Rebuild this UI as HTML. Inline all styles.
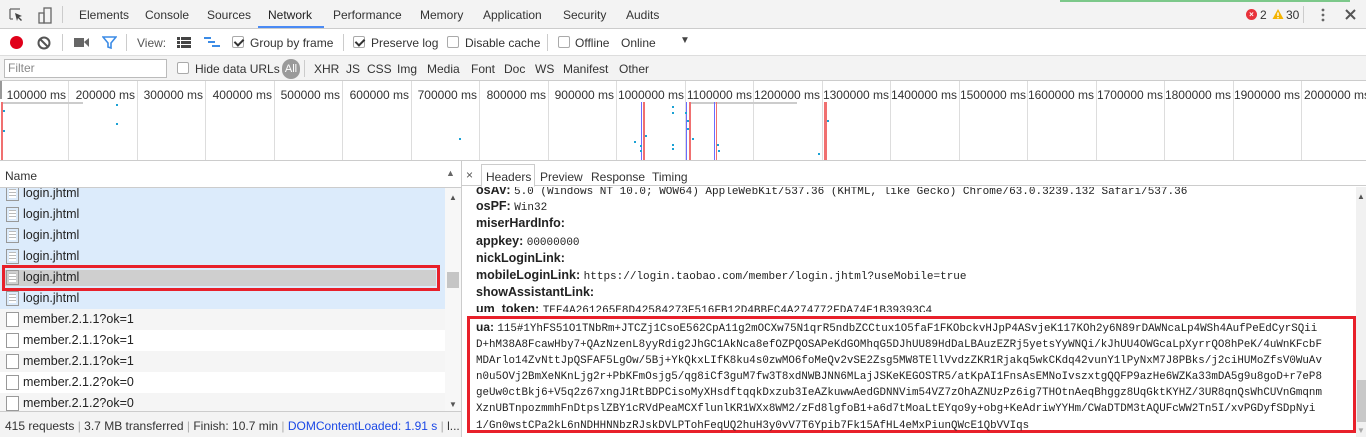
<!DOCTYPE html>
<html><head><meta charset="utf-8"><style>
*{margin:0;padding:0;box-sizing:border-box}
body{width:1366px;height:437px;overflow:hidden;background:#fff;font-family:"Liberation Sans",Arial,sans-serif;font-size:12px;color:#333;position:relative}
.a{position:absolute;white-space:nowrap}
.cb{position:absolute;width:12px;height:12px;border:1px solid #aaa;border-radius:2px;background:#fff}
.cb.on::after{content:"";position:absolute;left:3px;top:0px;width:4px;height:7px;border:solid #333;border-width:0 2px 2px 0;transform:rotate(45deg)}
.sep{position:absolute;width:1px;background:#ccc}
.row{position:absolute;left:0;width:445px;height:21px;line-height:21px;padding-left:23px;font-size:12.5px;color:#222}
.ic{position:absolute;left:6px;top:3px;width:13px;height:15px;border:1px solid #999;background:#fff}
.ic.t{background:repeating-linear-gradient(#fff 0 2px,#bbb 2px 3px);background-clip:content-box;padding:2px}
.hk{position:absolute;left:476px;font-weight:bold;font-size:12.5px;color:#222;white-space:nowrap}
.hk span{font-weight:normal;font-family:"Liberation Mono",monospace;font-size:11px}
.ua{position:absolute;left:476px;font-family:"Liberation Mono",monospace;font-size:10.85px;color:#222;white-space:nowrap;line-height:16.1px}
.gl{position:absolute;top:81px;height:79px;width:1px;background:#ddd}
.tl{position:absolute;top:88px;font-size:12px;color:#333;width:68px;text-align:right}
.d{position:absolute;width:2px;height:2px;background:#1ba1d4}
</style></head><body>
<div class="a" style="left:0;top:0;width:1366px;height:29px;background:#f3f3f3;border-bottom:1px solid #ccc"></div>
<div class="a" style="left:1060px;top:0;width:290px;height:2px;background:#7cc88a"></div>
<svg class="a" style="left:8px;top:7px" width="45" height="18" viewBox="0 0 45 18"><path d="M2 2h10M2 2v10M2 12h3" stroke="#666" fill="none" stroke-width="1.3"/><path d="M7 6l7 3-3 1 3 3-1 1-3-3-1 3z" fill="#444"/><rect x="36" y="1" width="7" height="15" fill="none" stroke="#666" stroke-width="1.3"/><rect x="31" y="6" width="5" height="10" fill="none" stroke="#666" stroke-width="1.3"/></svg>
<div class="sep" style="left:62px;top:6px;height:17px"></div>
<div class="a" style="left:79px;top:8px">Elements</div>
<div class="a" style="left:145px;top:8px">Console</div>
<div class="a" style="left:207px;top:8px">Sources</div>
<div class="a" style="left:268px;top:8px;color:#222">Network</div>
<div class="a" style="left:258px;top:26px;width:66px;height:2px;background:#4a8af4"></div>
<div class="a" style="left:333px;top:8px">Performance</div>
<div class="a" style="left:420px;top:8px">Memory</div>
<div class="a" style="left:483px;top:8px">Application</div>
<div class="a" style="left:563px;top:8px">Security</div>
<div class="a" style="left:626px;top:8px">Audits</div>
<div class="a" style="left:1246px;top:9px;width:11px;height:11px;border-radius:50%;background:#e8323a;color:#fff;font-size:8px;line-height:11px;text-align:center;font-weight:bold">×</div>
<div class="a" style="left:1260px;top:8px">2</div>
<svg class="a" style="left:1272px;top:8px" width="12" height="12"><path d="M6 1L11.5 11H0.5z" fill="#f4b400"/><rect x="5.3" y="4.5" width="1.4" height="3.5" fill="#fff"/><rect x="5.3" y="9" width="1.4" height="1.3" fill="#fff"/></svg>
<div class="a" style="left:1286px;top:8px">30</div>
<div class="sep" style="left:1303px;top:6px;height:17px"></div>
<svg class="a" style="left:1320px;top:7px" width="6" height="16"><circle cx="3" cy="3" r="1.4" fill="#666"/><circle cx="3" cy="8" r="1.4" fill="#666"/><circle cx="3" cy="13" r="1.4" fill="#666"/></svg>
<svg class="a" style="left:1345px;top:9px" width="11" height="11"><path d="M1 1l9 9M10 1l-9 9" stroke="#555" stroke-width="2"/></svg>
<div class="a" style="left:0;top:30px;width:1366px;height:26px;background:#fff;border-bottom:1px solid #ddd"></div>
<div class="a" style="left:10px;top:36px;width:13px;height:13px;border-radius:50%;background:#e0001a"></div>
<svg class="a" style="left:37px;top:36px" width="14" height="14"><circle cx="7" cy="7" r="5.5" stroke="#555" stroke-width="2" fill="none"/><path d="M3 3l8 8" stroke="#555" stroke-width="2"/></svg>
<div class="sep" style="left:62px;top:34px;height:17px"></div>
<svg class="a" style="left:74px;top:37px" width="15" height="11"><rect x="0" y="1" width="10" height="9" fill="#666"/><path d="M10 5l5-4v9z" fill="#666"/></svg>
<svg class="a" style="left:102px;top:36px" width="15" height="13"><path d="M1 1h13l-5 6v5l-3-1v-4z" fill="none" stroke="#3b8be6" stroke-width="1.6"/></svg>
<div class="sep" style="left:126px;top:34px;height:17px"></div>
<div class="a" style="left:137px;top:36px;color:#555">View:</div>
<svg class="a" style="left:177px;top:37px" width="14" height="11"><rect x="0" y="0" width="3" height="3" fill="#444"/><rect x="4" y="0" width="10" height="3" fill="#444"/><rect x="0" y="4" width="3" height="3" fill="#444"/><rect x="4" y="4" width="10" height="3" fill="#444"/><rect x="0" y="8" width="3" height="3" fill="#444"/><rect x="4" y="8" width="10" height="3" fill="#444"/></svg>
<svg class="a" style="left:204px;top:37px" width="16" height="12"><rect x="0" y="0" width="7" height="2" fill="#3b8be6"/><rect x="4" y="4" width="7" height="2" fill="#3b8be6"/><rect x="8" y="8" width="8" height="2" fill="#3b8be6"/></svg>
<div class="cb on" style="left:232px;top:36px"></div><div class="a" style="left:250px;top:36px">Group by frame</div>
<div class="sep" style="left:343px;top:34px;height:17px"></div>
<div class="cb on" style="left:353px;top:36px"></div><div class="a" style="left:371px;top:36px">Preserve log</div>
<div class="cb" style="left:447px;top:36px"></div><div class="a" style="left:465px;top:36px">Disable cache</div>
<div class="sep" style="left:547px;top:34px;height:17px"></div>
<div class="cb" style="left:558px;top:36px"></div><div class="a" style="left:575px;top:36px">Offline</div>
<div class="a" style="left:621px;top:36px">Online</div>
<div class="a" style="left:680px;top:35px;font-size:10px;color:#444">▼</div>
<div class="a" style="left:0;top:56px;width:1366px;height:25px;background:#f3f3f3;border-bottom:1px solid #ccc"></div>
<div class="a" style="left:4px;top:59px;width:163px;height:19px;border:1px solid #bbb;background:#fff;color:#888;padding:2px 3px;line-height:13px">Filter</div>
<div class="cb" style="left:177px;top:62px"></div><div class="a" style="left:195px;top:62px">Hide data URLs</div>
<div class="a" style="left:282px;top:59px;width:18px;height:20px;border-radius:9px;background:#9a9a9a;color:#fff;text-align:center;line-height:20px;font-size:11px">All</div>
<div class="sep" style="left:304px;top:60px;height:17px"></div>
<div class="a" style="left:314px;top:62px">XHR</div><div class="a" style="left:346px;top:62px">JS</div><div class="a" style="left:367px;top:62px">CSS</div><div class="a" style="left:397px;top:62px">Img</div><div class="a" style="left:427px;top:62px">Media</div><div class="a" style="left:471px;top:62px">Font</div><div class="a" style="left:504px;top:62px">Doc</div><div class="a" style="left:535px;top:62px">WS</div><div class="a" style="left:563px;top:62px">Manifest</div><div class="a" style="left:619px;top:62px">Other</div>
<div class="a" style="left:0;top:160px;width:1366px;height:1px;background:#ccc"></div>
<div class="gl" style="left:68px"></div><div class="gl" style="left:137px"></div><div class="gl" style="left:205px"></div><div class="gl" style="left:274px"></div><div class="gl" style="left:342px"></div><div class="gl" style="left:411px"></div><div class="gl" style="left:479px"></div><div class="gl" style="left:548px"></div><div class="gl" style="left:616px"></div><div class="gl" style="left:685px"></div><div class="gl" style="left:753px"></div><div class="gl" style="left:822px"></div><div class="gl" style="left:890px"></div><div class="gl" style="left:959px"></div><div class="gl" style="left:1027px"></div><div class="gl" style="left:1096px"></div><div class="gl" style="left:1164px"></div><div class="gl" style="left:1233px"></div><div class="gl" style="left:1301px"></div>
<div class="tl" style="left:-2px">100000 ms</div><div class="tl" style="left:67px">200000 ms</div><div class="tl" style="left:135px">300000 ms</div><div class="tl" style="left:204px">400000 ms</div><div class="tl" style="left:272px">500000 ms</div><div class="tl" style="left:341px">600000 ms</div><div class="tl" style="left:409px">700000 ms</div><div class="tl" style="left:478px">800000 ms</div><div class="tl" style="left:546px">900000 ms</div><div class="tl" style="left:615px;width:69px">1000000 ms</div><div class="tl" style="left:684px;width:68px">1100000 ms</div><div class="tl" style="left:752px;width:68px">1200000 ms</div><div class="tl" style="left:821px;width:68px">1300000 ms</div><div class="tl" style="left:889px;width:68px">1400000 ms</div><div class="tl" style="left:958px;width:68px">1500000 ms</div><div class="tl" style="left:1026px;width:68px">1600000 ms</div><div class="tl" style="left:1095px;width:68px">1700000 ms</div><div class="tl" style="left:1163px;width:68px">1800000 ms</div><div class="tl" style="left:1232px;width:68px">1900000 ms</div><div class="a" style="left:1304px;top:88px">2000000 ms</div>
<div class="a" style="left:0;top:81px;width:2px;height:18px;background:#999"></div>
<div class="a" style="left:2px;top:102px;width:81px;height:2px;background:#ccc"></div>
<div class="a" style="left:690px;top:102px;width:107px;height:2px;background:#ccc"></div>
<div class="a" style="left:1px;top:102px;width:2px;height:58px;background:#f07070"></div>
<div class="a" style="left:641px;top:102px;width:1px;height:58px;background:#6b6bff"></div><div class="a" style="left:643px;top:102px;width:2px;height:58px;background:#f07070"></div>
<div class="a" style="left:686px;top:102px;width:1px;height:58px;background:#6b6bff"></div><div class="a" style="left:689px;top:102px;width:2px;height:58px;background:#f07070"></div>
<div class="a" style="left:714px;top:102px;width:1px;height:58px;background:#6b6bff"></div><div class="a" style="left:716px;top:102px;width:1px;height:58px;background:#f07070"></div>
<div class="a" style="left:824px;top:102px;width:3px;height:58px;background:#f07070"></div>
<div class="d" style="left:116px;top:104px"></div><div class="d" style="left:116px;top:123px"></div><div class="d" style="left:3px;top:130px"></div><div class="d" style="left:3px;top:110px"></div>
<div class="d" style="left:672px;top:106px"></div><div class="d" style="left:672px;top:112px"></div><div class="d" style="left:672px;top:144px"></div><div class="d" style="left:672px;top:148px"></div><div class="d" style="left:634px;top:141px"></div><div class="d" style="left:640px;top:145px"></div><div class="d" style="left:640px;top:150px"></div><div class="d" style="left:645px;top:135px"></div><div class="d" style="left:685px;top:112px"></div><div class="d" style="left:687px;top:120px"></div><div class="d" style="left:687px;top:128px"></div><div class="d" style="left:692px;top:138px"></div><div class="d" style="left:718px;top:150px"></div><div class="d" style="left:717px;top:144px"></div><div class="d" style="left:827px;top:120px"></div><div class="d" style="left:818px;top:153px"></div><div class="d" style="left:459px;top:138px"></div>
<div class="a" style="left:0;top:161px;width:461px;height:27px;background:#fff;border-bottom:1px solid #ccc"></div>
<div class="a" style="left:5px;top:169px">Name</div>
<div class="a" style="left:446px;top:168px;font-size:9px;color:#666">▲</div>
<div class="a" style="left:0;top:188px;width:445px;height:223px;overflow:hidden">
<div class="row" style="top:-5px;background:#dcebfb"><div class="ic t"></div>login.jhtml</div>
<div class="row" style="top:16px;background:#dcebfb"><div class="ic t"></div>login.jhtml</div>
<div class="row" style="top:37px;background:#dcebfb"><div class="ic t"></div>login.jhtml</div>
<div class="row" style="top:58px;background:#dcebfb"><div class="ic t"></div>login.jhtml</div>
<div class="row" style="top:79px;background:#dcebfb"><div class="a" style="left:4px;top:3px;width:432px;height:16px;background:#cfcfcf"></div><div class="ic t"></div><span style="position:relative">login.jhtml</span></div>
<div class="row" style="top:100px;background:#dcebfb"><div class="ic t"></div>login.jhtml</div>
<div class="row" style="top:121px;background:#f5f5f5"><div class="ic"></div>member.2.1.1?ok=1</div>
<div class="row" style="top:142px;background:#fff"><div class="ic"></div>member.2.1.1?ok=1</div>
<div class="row" style="top:163px;background:#f5f5f5"><div class="ic"></div>member.2.1.1?ok=1</div>
<div class="row" style="top:184px;background:#fff"><div class="ic"></div>member.2.1.2?ok=0</div>
<div class="row" style="top:205px;background:#f5f5f5"><div class="ic"></div>member.2.1.2?ok=0</div>
</div>
<div class="a" style="left:2px;top:265px;width:438px;height:26px;border:3px solid #e8202a"></div>
<div class="a" style="left:445px;top:188px;width:16px;height:223px;background:#f7f7f7"></div>
<div class="a" style="left:449px;top:193px;font-size:8px;color:#555">▲</div>
<div class="a" style="left:447px;top:272px;width:12px;height:16px;background:#c5c5c5"></div>
<div class="a" style="left:449px;top:400px;font-size:8px;color:#555">▼</div>
<div class="a" style="left:0;top:411px;width:461px;height:26px;background:#f3f3f3;border-top:1px solid #ccc"></div>
<div class="a" style="left:5px;top:419px;color:#333">415 requests <span style="color:#aaa">|</span> 3.7 MB transferred <span style="color:#aaa">|</span> Finish: 10.7 min <span style="color:#aaa">|</span> <span style="color:#1a47e6">DOMContentLoaded: 1.91 s</span> <span style="color:#aaa">|</span> l...</div>
<div class="a" style="left:461px;top:161px;width:1px;height:276px;background:#ccc"></div>
<div class="a" style="left:462px;top:161px;width:904px;height:25px;background:#fff;border-bottom:1px solid #ccc"></div>
<div class="a" style="left:466px;top:168px;font-size:12px;color:#555">×</div>
<div class="a" style="left:481px;top:164px;width:54px;height:23px;border:1px solid #ccc;border-bottom:1px solid #fff;background:#fff"></div>
<div class="a" style="left:486px;top:170px">Headers</div>
<div class="a" style="left:540px;top:170px">Preview</div>
<div class="a" style="left:591px;top:170px">Response</div>
<div class="a" style="left:652px;top:170px">Timing</div>
<div class="a" style="left:462px;top:187px;width:888px;height:250px;overflow:hidden">
<div class="hk" style="left:14px;top:-4px">osAV: <span>5.0 (Windows NT 10.0; WOW64) AppleWebKit/537.36 (KHTML, like Gecko) Chrome/63.0.3239.132 Safari/537.36</span></div>
</div>
<div class="hk" style="top:199px">osPF: <span>Win32</span></div>
<div class="hk" style="top:216px">miserHardInfo:</div>
<div class="hk" style="top:234px">appkey: <span>00000000</span></div>
<div class="hk" style="top:251px">nickLoginLink:</div>
<div class="hk" style="top:268px">mobileLoginLink: <span>https://login.taobao.com/member/login.jhtml?useMobile=true</span></div>
<div class="hk" style="top:285px">showAssistantLink:</div>
<div class="a" style="left:462px;top:300px;width:888px;height:12px;overflow:hidden"><div class="hk" style="left:14px;top:2px">um_token: <span>TEF4A261265E8D42584273F516FB12D4BBFC4A274772FDA74F1B39393C4</span></div></div>
<div class="a" style="left:467px;top:316px;width:889px;height:117px;border:3px solid #e8202a;background:#fff"></div>
<div class="ua" style="top:319px"><b style="font-family:'Liberation Sans',sans-serif;font-size:12px">ua: </b>115#1YhFS51O1TNbRm+JTCZj1CsoE562CpA11g2mOCXw75N1qrR5ndbZCCtux1O5faF1FKObckvHJpP4ASvjeK117KOh2y6N89rDAWNcaLp4WSh4AufPeEdCyrSQii<br>D+hM38A8FcawHby7+QAzNzenL8yyRdig2JhGC1AkNca8efOZPQOSAPeKdGOMhqG5DJhUU89HdDaLBAuzEZRj5yetsYyWNQi/kJhUU4OWGcaLpXyrrQO8hPeK/4uWnKFcbF<br>MDArlo14ZvNttJpQSFAF5LgOw/5Bj+YkQkxLIfK8ku4s0zwMO6foMeQv2vSE2Zsg5MW8TEllVvdzZKR1Rjakq5wkCKdq42vunY1lPyNxM7J8PBks/j2ciHUMoZfsV0WuAv<br>n0u5OVj2BmXeNKnLjg2r+PbKFmOsjg5/qg8iCf3guM7fw3T8xdNWBJNN6MLajJSKeKEGOSTR5/atKpAI1FnsAsEMNoIvszxtgQQFP9azHe6WZKa33mDA5g9u8goD+r7eP8<br>geUw0ctBkj6+V5q2z67xngJ1RtBDPCisoMyXHsdftqqkDxzub3IeAZkuwwAedGDNNVim54VZ7zOhAZNUzPz6ig7THOtnAeqBhggz8UqGktKYHZ/3UR8qnQsWhCUVnGmqnm<br>XznUBTnpozmmhFnDtpslZBY1cRVdPeaMCXflunlKR1WXx8WM2/zFd8lgfoB1+a6d7tMoaLtEYqo9y+obg+KeAdriwYYHm/CWaDTDM3tAQUFcWW2Tn5I/xvPGDyfSDpNyi<br>1/Gn0wstCPa2kL6nNDHHNNbzRJskDVLPTohFeqUQ2huH3y0vV7T6Ypib7Fk15AfHL4eMxPiunQWcE1QbVVIqs</div>
<div class="a" style="left:1356px;top:187px;width:10px;height:250px;background:#f1f1f1"></div>
<div class="a" style="left:1357px;top:192px;font-size:8px;color:#555">▲</div>
<div class="a" style="left:1357px;top:380px;width:9px;height:42px;background:#c8c8c8"></div>
<div class="a" style="left:1357px;top:426px;font-size:8px;color:#aaa">▼</div>
</body></html>
